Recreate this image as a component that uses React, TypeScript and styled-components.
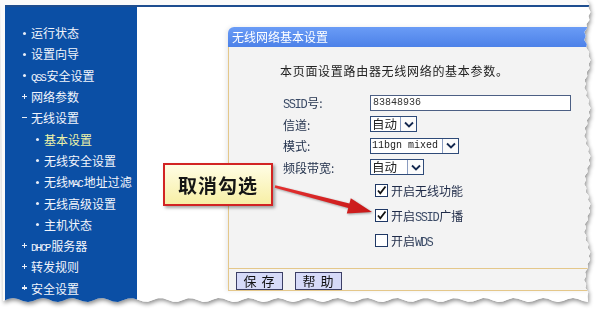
import React from "react";
import styled, { createGlobalStyle } from "styled-components";

const GlobalStyle = createGlobalStyle`
  html, body {
    margin: 0;
    padding: 0;
    background: #fff;
  }
  body {
    font-family: "Noto Sans CJK SC", "Liberation Sans", sans-serif;
  }
`;

// jagged torn edge on right and bottom of the screenshot
const TORN = (() => {
  const pts: string[] = ["0px 0px"];
  for (let y = 0; y <= 296; y += 4) {
    const x = 584 + (Math.sin(y * 1.7) + 1) * 2.4 + ((y / 4) % 2 ? 1.8 : 0);
    pts.push(`${x.toFixed(1)}px ${y}px`);
  }
  for (let x = 588; x >= 0; x -= 5) {
    const y = 296.5 + (Math.sin(x * 2.3) + 1) * 2 + ((x / 5) % 2 ? 1.5 : 0);
    pts.push(`${x}px ${y.toFixed(1)}px`);
  }
  return `polygon(${pts.join(",")})`;
})();

const Stage = styled.div`
  width: 600px;
  height: 315px;
  position: relative;
  overflow: hidden;
  background: #fff;
`;

const Shadow = styled.div`
  width: 592px;
  height: 304px;
  filter: drop-shadow(1px 2px 2px rgba(0, 0, 0, 0.45));
`;

const Paper = styled.div`
  width: 592px;
  height: 304px;
  box-sizing: border-box;
  padding: 5px 0 0 5px;
  background: #fafafa;
  display: flex;
  flex-direction: column;
  clip-path: ${TORN};
`;

const Frame = styled.div`
  flex: 1;
  display: flex;
  border-top: 2px solid #1d4d8f;
  min-height: 0;
`;

const Sidebar = styled.nav`
  width: 132px;
  flex-shrink: 0;
  background: #0b4fa5;
  padding-top: 15px;
  box-sizing: border-box;
`;

const NavItem = styled.div<{ $level: number; $active?: boolean }>`
  height: 21.3px;
  display: flex;
  align-items: center;
  padding-left: ${(p) => (p.$level ? 29 : 16)}px;
  color: ${(p) => (p.$active ? "#eef3a8" : "#f2f5fc")};
  font-size: 12px;
  white-space: nowrap;
`;

const Marker = styled.span<{ $kind: "dot" | "plus" | "minus" }>`
  width: 10px;
  flex-shrink: 0;
  position: relative;
  height: 10px;
  &::before {
    content: "";
    position: absolute;
    left: ${(p) => (p.$kind === "dot" ? 2 : 1)}px;
    top: 4px;
    width: ${(p) => (p.$kind === "dot" ? 3 : 5)}px;
    height: ${(p) => (p.$kind === "dot" ? 3 : 1.5)}px;
    border-radius: ${(p) => (p.$kind === "dot" ? "50%" : "0")};
    background: #e8eef8;
  }
  &::after {
    content: "";
    display: ${(p) => (p.$kind === "plus" ? "block" : "none")};
    position: absolute;
    left: 2.75px;
    top: 2.25px;
    width: 1.5px;
    height: 5px;
    background: #e8eef8;
  }
`;

const NavLatin = styled.span`
  font-family: "Liberation Mono", monospace;
  font-size: 10.5px;
  letter-spacing: -1.6px;
  margin-right: 1.5px;
`;

const Main = styled.main`
  flex: 1;
  background: #fff;
  padding: 20px 0 0 91px;
  min-width: 0;
  overflow: hidden;
`;

const Panel = styled.section`
  width: 380px;
  box-shadow: -2px 0 4px rgba(0, 0, 0, 0.08);
  border-top-left-radius: 6px;
`;

const PanelHeader = styled.div`
  height: 20px;
  line-height: 20px;
  padding-left: 4px;
  color: #fff;
  font-size: 12px;
  border-top-left-radius: 6px;
  background: linear-gradient(#6a9cf6, #4c81e8);
`;

const PanelBody = styled.div`
  height: 221px;
  box-sizing: border-box;
  background: #f3f3f3;
  border-left: 1px solid #e4c78a;
  padding-top: 16px;
`;

const Intro = styled.p`
  margin: 0 0 13px 51px;
  font-size: 12px;
  line-height: 16px;
  letter-spacing: 0.7px;
  color: #222;
`;

const FormGrid = styled.div`
  display: grid;
  grid-template-columns: 87px auto;
  grid-auto-rows: 21.5px;
  align-items: center;
  padding-left: 54px;
`;

const Label = styled.span`
  font-size: 12px;
  color: #23324d;
`;

const Latin = styled.span`
  font-family: "Liberation Mono", monospace;
  font-size: 12px;
  letter-spacing: -1.4px;
  margin-right: 1px;
  color: #3a4a66;
`;

const TextField = styled.div`
  width: 197px;
  height: 14px;
  border: 1px solid #4c5f84;
  background: #fff;
  font-family: "Liberation Mono", monospace;
  font-size: 10px;
  line-height: 14px;
  padding-left: 2px;
  color: #333;
`;

const SelectBox = styled.div<{ $w: number }>`
  width: ${(p) => p.$w}px;
  height: 14px;
  border: 1px solid #2e4a78;
  background: #fff;
  display: flex;
  box-sizing: content-box;
`;

const SelectValue = styled.span<{ $mono?: boolean }>`
  flex: 1;
  padding-left: 1px;
  font-family: ${(p) =>
    p.$mono ? '"Liberation Mono", monospace' : '"Noto Sans CJK SC", sans-serif'};
  font-size: ${(p) => (p.$mono ? 10 : 12.5)}px;
  line-height: 14px;
  color: #222;
  white-space: nowrap;
`;

const SelectArrow = styled.span`
  width: 15px;
  border-left: 1px solid #8a9cc0;
  display: flex;
  align-items: center;
  justify-content: center;
  background: #fbfbfb;
`;

const Checks = styled.div`
  padding-left: 146px;
`;

const CheckRow = styled.div`
  height: 25px;
  display: flex;
  align-items: center;
  gap: 3px;
  font-size: 12px;
  color: #1f2b48;
`;

const Box = styled.span`
  width: 11px;
  height: 11px;
  border: 1px solid #1f3865;
  background: #fff;
  display: flex;
  align-items: center;
  justify-content: center;
`;

const Footer = styled.div`
  height: 23px;
  box-sizing: border-box;
  background: #f3f3f3;
  border-left: 1px solid #e4c78a;
  border-top: 1px solid #e4c78a;
  border-bottom: 1px solid #e4c78a;
  padding: 3px 0 0 7px;
  display: flex;
  gap: 12px;
  align-items: flex-start;
`;

const Button = styled.button`
  width: 47px;
  height: 18px;
  padding: 0;
  border: 1px solid #3c3f66;
  background: #d6daf8;
  font-family: "Noto Sans CJK SC", sans-serif;
  font-size: 13px;
  line-height: 14px;
  letter-spacing: 1px;
  color: #111;
`;

const Callout = styled.div`
  position: absolute;
  left: 163px;
  top: 163px;
  width: 110px;
  height: 43px;
  box-sizing: border-box;
  border: 2px solid #d22424;
  background: linear-gradient(#fffde4, #f7efa6);
  box-shadow: 2px 2px 3px rgba(0, 0, 0, 0.35);
  display: flex;
  align-items: center;
  justify-content: center;
  font-family: "Noto Sans CJK SC", sans-serif;
  font-weight: 700;
  font-size: 19px;
  letter-spacing: 1px;
  color: #151515;
`;

const Overlay = styled.svg`
  position: absolute;
  left: 0;
  top: 0;
  pointer-events: none;
`;

const Chevron = () => (
  <svg width="10" height="7" viewBox="0 0 10 7">
    <path d="M1 1.5 L5 5.5 L9 1.5" fill="none" stroke="#14284f" strokeWidth="1.8" />
  </svg>
);

const Check = () => (
  <svg width="11" height="11" viewBox="0 0 11 11">
    <path d="M2 5.5 L4.3 8.3 L9.5 1.5" fill="none" stroke="#111" strokeWidth="1.8" />
  </svg>
);

const Select: React.FC<{ w: number; value: string; mono?: boolean }> = ({ w, value, mono }) => (
  <SelectBox $w={w}>
    <SelectValue $mono={mono}>{value}</SelectValue>
    <SelectArrow>
      <Chevron />
    </SelectArrow>
  </SelectBox>
);

type Nav = { level: number; kind: "dot" | "plus" | "minus"; text: React.ReactNode; active?: boolean };

const navItems: Nav[] = [
  { level: 0, kind: "dot", text: "运行状态" },
  { level: 0, kind: "dot", text: "设置向导" },
  { level: 0, kind: "dot", text: <><NavLatin>QSS</NavLatin>安全设置</> },
  { level: 0, kind: "plus", text: "网络参数" },
  { level: 0, kind: "minus", text: "无线设置" },
  { level: 1, kind: "dot", text: "基本设置", active: true },
  { level: 1, kind: "dot", text: "无线安全设置" },
  { level: 1, kind: "dot", text: <>无线<NavLatin>MAC</NavLatin>地址过滤</> },
  { level: 1, kind: "dot", text: "无线高级设置" },
  { level: 1, kind: "dot", text: "主机状态" },
  { level: 0, kind: "plus", text: <><NavLatin>DHCP</NavLatin>服务器</> },
  { level: 0, kind: "plus", text: "转发规则" },
  { level: 0, kind: "plus", text: "安全设置" },
];

export default function App() {
  return (
    <Stage>
      <GlobalStyle />
      <Shadow>
        <Paper>
          <Frame>
            <Sidebar>
              {navItems.map((n, i) => (
                <NavItem key={i} $level={n.level} $active={n.active}>
                  <Marker $kind={n.kind} />
                  <span>{n.text}</span>
                </NavItem>
              ))}
            </Sidebar>
            <Main>
              <Panel>
                <PanelHeader>无线网络基本设置</PanelHeader>
                <PanelBody>
                  <Intro>本页面设置路由器无线网络的基本参数。</Intro>
                  <FormGrid>
                    <Label>
                      <Latin>SSID</Latin>号:
                    </Label>
                    <TextField>83848936</TextField>
                    <Label>信道:</Label>
                    <Select w={45} value="自动" />
                    <Label>模式:</Label>
                    <Select w={87} value="11bgn mixed" mono />
                    <Label>频段带宽:</Label>
                    <Select w={52} value="自动" />
                  </FormGrid>
                  <Checks>
                    <CheckRow>
                      <Box>
                        <Check />
                      </Box>
                      <span>开启无线功能</span>
                    </CheckRow>
                    <CheckRow>
                      <Box>
                        <Check />
                      </Box>
                      <span>
                        开启<Latin>SSID</Latin>广播
                      </span>
                    </CheckRow>
                    <CheckRow>
                      <Box />
                      <span>
                        开启<Latin>WDS</Latin>
                      </span>
                    </CheckRow>
                  </Checks>
                </PanelBody>
                <Footer>
                  <Button>保 存</Button>
                  <Button>帮 助</Button>
                </Footer>
              </Panel>
            </Main>
          </Frame>
        </Paper>
      </Shadow>
      <Callout>取消勾选</Callout>
      <Overlay width="600" height="315" viewBox="0 0 600 315">
        <defs>
          <linearGradient id="arrowFill" x1="0" y1="0" x2="1" y2="0">
            <stop offset="0" stopColor="#e43030" />
            <stop offset="1" stopColor="#c81818" />
          </linearGradient>
        </defs>
        <g style={{ filter: "drop-shadow(1px 1px 1px rgba(0,0,0,0.35))" }}>
          <polygon
            points="275.3,185.3 349.4,203.6 350.8,198.2 372,212 346.8,213.6 348.2,208.1 274.7,187.7"
            fill="url(#arrowFill)"
          />
        </g>
      </Overlay>
    </Stage>
  );
}
